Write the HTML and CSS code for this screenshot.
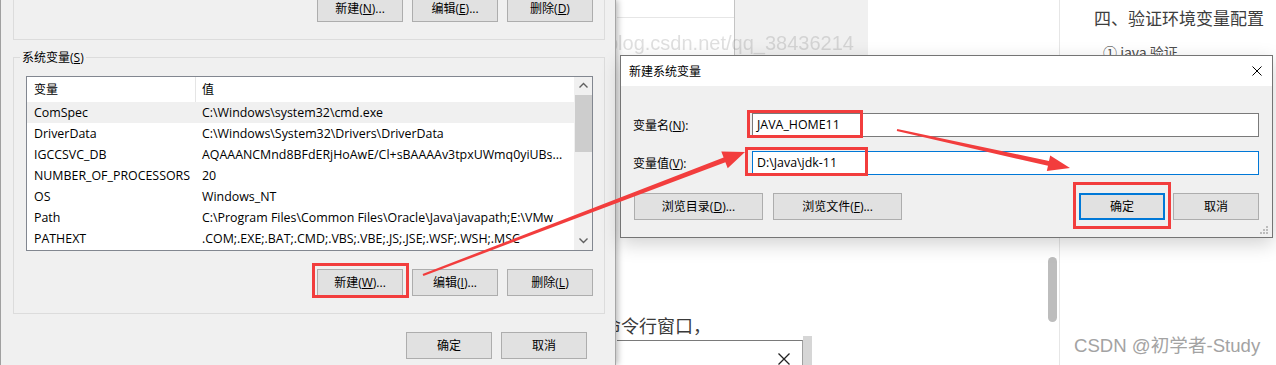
FILE: index.html
```html
<!DOCTYPE html>
<html lang="zh-CN">
<head>
<meta charset="utf-8">
<title>新建系统变量</title>
<link rel="stylesheet" href="styles.css">
</head>
<body>
<div class="page">
  <div class="page-main">
    <div class="strip">
      <div class="strip-thumb"><div class="strip-line"></div></div>
      <div class="strip-grey"></div>
    </div>
    <div class="watermark">blog.csdn.net/qq_38436214</div>
    <div class="cmd-text">命令行窗口，</div>
    <div class="sub-window">
      <svg class="sub-close" width="12" height="12" viewBox="0 0 12 12"><path d="M0.5 0.5 L11.5 11.5 M11.5 0.5 L0.5 11.5" stroke="#222" stroke-width="1.3" fill="none"/></svg>
    </div>
    <div class="sub-edge"></div>
    <div class="page-scroll"></div>
  </div>
  <div class="page-side">
    <div class="side-title">四、验证环境变量配置</div>
    <div class="side-item">① java 验证</div>
    <div class="csdn-mark">CSDN @初学者-Study</div>
  </div>
</div>

<div class="sysdlg">
  <div class="grp-top">
    <button class="btn">新建(<u>N</u>)...</button>
    <button class="btn">编辑(<u>E</u>)...</button>
    <button class="btn">删除(<u>D</u>)</button>
  </div>
  <div class="grp-sys">
    <div class="grp-label">系统变量(<u>S</u>)</div>
    <div class="list">
      <div class="list-body">
        <div class="list-head"><span class="c1">变量</span><span class="c2">值</span></div>
        <div class="row sel"><span class="c1">ComSpec</span><span class="c2">C:\Windows\system32\cmd.exe</span></div>
        <div class="row"><span class="c1">DriverData</span><span class="c2">C:\Windows\System32\Drivers\DriverData</span></div>
        <div class="row"><span class="c1">IGCCSVC_DB</span><span class="c2">AQAAANCMnd8BFdERjHoAwE/Cl+sBAAAAv3tpxUWmq0yiUBs...</span></div>
        <div class="row"><span class="c1">NUMBER_OF_PROCESSORS</span><span class="c2">20</span></div>
        <div class="row"><span class="c1">OS</span><span class="c2">Windows_NT</span></div>
        <div class="row"><span class="c1">Path</span><span class="c2">C:\Program Files\Common Files\Oracle\Java\javapath;E:\VMw</span></div>
        <div class="row"><span class="c1">PATHEXT</span><span class="c2">.COM;.EXE;.BAT;.CMD;.VBS;.VBE;.JS;.JSE;.WSF;.WSH;.MSC</span></div>
      </div>
      <div class="vscroll">
        <div class="sarrow"><svg width="17" height="17" viewBox="0 0 17 17"><path d="M4.5 10.5 L8.5 6.5 L12.5 10.5" stroke="#606060" stroke-width="1.4" fill="none"/></svg></div>
        <div class="thumb"></div>
        <div class="track"></div>
        <div class="sarrow"><svg width="17" height="17" viewBox="0 0 17 17"><path d="M4.5 6.5 L8.5 10.5 L12.5 6.5" stroke="#606060" stroke-width="1.4" fill="none"/></svg></div>
      </div>
    </div>
    <div class="btnrow">
      <button class="btn">新建(<u>W</u>)...</button>
      <button class="btn">编辑(<u>I</u>)...</button>
      <button class="btn">删除(<u>L</u>)</button>
    </div>
  </div>
  <div class="dlg-foot">
    <button class="btn">确定</button>
    <button class="btn">取消</button>
  </div>
</div>

<div class="newdlg">
  <div class="titlebar">
    <span class="title">新建系统变量</span>
    <span class="close"><svg width="10" height="10" viewBox="0 0 10 10"><path d="M0.5 0.5 L9.5 9.5 M9.5 0.5 L0.5 9.5" stroke="#000" stroke-width="1" fill="none"/></svg></span>
  </div>
  <div class="dlg-body">
    <div class="form-row">
      <label class="flabel">变量名(<u>N</u>):</label>
      <div class="finput">JAVA_HOME11</div>
    </div>
    <div class="form-row gap">
      <label class="flabel">变量值(<u>V</u>):</label>
      <div class="finput focus">D:\Java\jdk-11</div>
    </div>
    <div class="dlg-btns">
      <button class="btn wide">浏览目录(<u>D</u>)...</button>
      <button class="btn wide">浏览文件(<u>F</u>)...</button>
      <span class="spacer"></span>
      <button class="btn default">确定</button>
      <button class="btn">取消</button>
    </div>
  </div>
  <svg class="grip" width="8" height="8" viewBox="0 0 8 8">
    <rect x="6" y="0" width="2" height="2" fill="#bcbcbc"/>
    <rect x="3" y="3" width="2" height="2" fill="#bcbcbc"/>
    <rect x="6" y="3" width="2" height="2" fill="#bcbcbc"/>
    <rect x="0" y="6" width="2" height="2" fill="#bcbcbc"/>
    <rect x="3" y="6" width="2" height="2" fill="#bcbcbc"/>
    <rect x="6" y="6" width="2" height="2" fill="#bcbcbc"/>
  </svg>
</div>

<div class="mark mark-new"></div>
<div class="mark mark-name"></div>
<div class="mark mark-value"></div>
<div class="mark mark-ok"></div>

<svg class="arrows" width="1276" height="365" viewBox="0 0 1276 365">
  <polygon points="423.4,276.0 422.6,274.0 723.6,157.6 721.3,151.5 745,152 727.7,168.3 725.4,162.2" fill="#f23d3d"/>
  <polygon points="896.8,131.0 897.2,129.0 1049.0,160.9 1050.2,155.5 1070,168 1046.8,171.1 1048.0,165.8" fill="#f23d3d"/>
</svg>
</body>
</html>
```

FILE: styles.css
```css
* { box-sizing: border-box; }
html, body { margin: 0; padding: 0; }
body {
  width: 1276px;
  height: 365px;
  overflow: hidden;
  position: relative;
  background: #fff;
  font-family: "Open Sans", "Noto Sans CJK SC", sans-serif;
  font-size: 12px;
  color: #000;
}
u { text-decoration: underline; text-underline-offset: 1px; }

/* background web page */
.page {
  position: absolute;
  left: 617px;
  top: 0;
  width: 659px;
  height: 365px;
  display: grid;
  grid-template-columns: 442px 1fr;
  z-index: 0;
}
.page-main { position: relative; }
.strip { display: flex; height: 56px; }
.strip-thumb { width: 118px; border-right: 1px solid #c4c4c4; }
.strip-line { height: 18px; border-bottom: 1px solid #e6e6e6; }
.strip-grey { width: 133px; background: #f0f0f0; }
.watermark {
  position: absolute;
  left: -10px;
  top: 30px;
  font-family: "Liberation Sans", Arial, sans-serif;
  font-size: 20px;
  line-height: 26px;
  color: rgba(120, 120, 120, 0.24);
  filter: blur(0.5px);
  white-space: nowrap;
}
.cmd-text {
  position: absolute;
  left: -14px;
  top: 312px;
  font-family: "Noto Sans CJK SC", sans-serif;
  font-size: 18px;
  line-height: 26px;
  color: #3a3a3a;
  white-space: nowrap;
}
.sub-window {
  position: absolute;
  left: 0;
  top: 340px;
  width: 186px;
  height: 30px;
  background: #fff;
  border-top: 1px solid #7a7a7a;
  border-right: 1px solid #a0a0a0;
}
.sub-close { position: absolute; left: 161px; top: 12px; }
.sub-edge {
  position: absolute;
  left: 186px;
  top: 336px;
  width: 9px;
  height: 30px;
  background: #d6d6d6;
}
.page-scroll {
  position: absolute;
  left: 431px;
  top: 257px;
  width: 9px;
  height: 65px;
  border-radius: 5px;
  background: #bdbdbd;
}
.page-side {
  border-left: 1px solid #e6e6e6;
  display: flex;
  flex-direction: column;
  padding-left: 14px;
  font-family: "Noto Sans CJK SC", sans-serif;
}
.side-title {
  margin: 6px 0 0 20px;
  font-size: 17px;
  line-height: 24px;
  color: #3d3d3d;
  white-space: nowrap;
}
.side-item {
  margin: 12px 0 0 29px;
  font-size: 14px;
  line-height: 20px;
  color: #4d4d4d;
}
.csdn-mark {
  margin-top: auto;
  margin-bottom: 7px;
  font-family: "Liberation Sans", "Noto Sans CJK SC", sans-serif;
  font-size: 18.6px;
  line-height: 24px;
  color: #a3a3a3;
  white-space: nowrap;
}

/* shared button */
.btn {
  width: 86px;
  height: 27px;
  padding: 0;
  margin: 0;
  background: #e1e1e1;
  border: 1px solid #adadad;
  font-family: "Open Sans", "Noto Sans CJK SC", sans-serif;
  font-size: 12px;
  line-height: 25px;
  color: #000;
  text-align: center;
  white-space: nowrap;
}

/* left dialog: environment variables */
.sysdlg {
  position: absolute;
  left: 0;
  top: 0;
  width: 616px;
  height: 365px;
  background: #f0f0f0;
  border-left: 1px solid #a0a0a0;
  border-right: 1px solid #a6a6a6;
  box-shadow: 2px 0 6px rgba(0, 0, 0, 0.28);
  padding-left: 12px;
  z-index: 2;
}
.grp-top {
  margin-top: -25px;
  width: 592px;
  height: 65px;
  border: 1px solid #dcdcdc;
  border-top: none;
  display: flex;
  justify-content: flex-end;
  align-items: flex-end;
  gap: 9px;
  padding: 0 11px 17px 0;
}
.grp-sys {
  margin-top: 17px;
  width: 592px;
  border: 1px solid #dcdcdc;
  padding: 0 11px 17px 12px;
}
.grp-label {
  display: block;
  width: max-content;
  margin: -8px 0 0 -6px;
  padding: 0 2px;
  background: #f0f0f0;
  line-height: 16px;
  height: 16px;
}
.list {
  margin-top: 10px;
  width: 567px;
  height: 175px;
  border: 1px solid #828790;
  display: flex;
  background: #fff;
}
.list-body { width: 547px; overflow: hidden; font-size: 12.4px; }
.list-head { display: flex; height: 25px; line-height: 25px; font-size: 12px; }
.list-head .c1 { border-right: 1px solid #e5e5e5; }
.row { display: flex; height: 21px; line-height: 21px; }
.row.sel { background: #f0f0f0; }
.c1 { width: 169px; flex: none; padding-left: 7px; white-space: nowrap; overflow: hidden; }
.c2 { flex: 1; padding-left: 6px; white-space: nowrap; overflow: hidden; }
.vscroll {
  width: 18px;
  background: #f0f0f0;
  display: flex;
  flex-direction: column;
  padding-left: 1px;
}
.sarrow { height: 18px; flex: none; }
.thumb { height: 57px; background: #cdcdcd; flex: none; }
.track { flex: 1; }
.btnrow {
  margin-top: 18px;
  display: flex;
  justify-content: flex-end;
  gap: 9px;
}
.dlg-foot {
  margin-top: 18px;
  width: 592px;
  display: flex;
  justify-content: flex-end;
  gap: 9px;
  padding-right: 18px;
}

/* right dialog: new system variable */
.newdlg {
  position: absolute;
  left: 620px;
  top: 55px;
  width: 653px;
  height: 183px;
  background: #f0f0f0;
  border: 1px solid #747474;
  box-shadow: 0 6px 18px rgba(0, 0, 0, 0.18);
  z-index: 3;
}
.titlebar {
  height: 30px;
  background: #fff;
  display: flex;
  align-items: center;
  justify-content: space-between;
  padding-left: 8px;
}
.close {
  width: 30px;
  height: 30px;
  display: flex;
  align-items: center;
  justify-content: center;
}
.close svg { display: block; }
.dlg-body { padding: 27px 13px 0 12px; }
.form-row { display: flex; align-items: center; height: 24px; }
.form-row.gap { margin-top: 14px; }
.flabel { width: 119px; flex: none; }
.finput {
  flex: 1;
  height: 24px;
  background: #fff;
  border: 1px solid #7a7a7a;
  padding-left: 4px;
  line-height: 22px;
  white-space: nowrap;
  font-size: 12.4px;
}
.finput.focus { border-color: #0078d7; }
.dlg-btns {
  margin-top: 18px;
  display: flex;
  align-items: center;
}
.btn.wide { width: 129px; margin-right: 10px; }
.dlg-btns .btn.wide:first-child { margin-left: 1px; }
.spacer { flex: 1; }
.btn.default { border: 2px solid #0078d7; line-height: 23px; margin-right: 8px; }
.grip { position: absolute; right: 4px; bottom: 3px; }

/* red annotations */
.mark {
  position: absolute;
  border: 3px solid #f23d3d;
  z-index: 5;
}
.mark-new { left: 312px; top: 263px; width: 97px; height: 35px; }
.mark-name { left: 747px; top: 110px; width: 116px; height: 28px; }
.mark-value { left: 745px; top: 147px; width: 123px; height: 29px; }
.mark-ok { left: 1073px; top: 182px; width: 98px; height: 47px; }
.arrows {
  position: absolute;
  left: 0;
  top: 0;
  z-index: 6;
  pointer-events: none;
}
```
